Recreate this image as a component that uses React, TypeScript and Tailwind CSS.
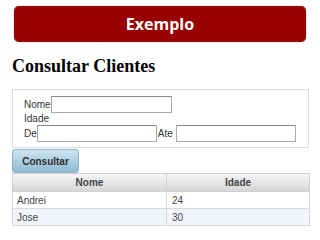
export default function App() {
  const rows = [
    { nome: "Andrei", idade: "24" },
    { nome: "Jose", idade: "30" },
  ];

  return (
    <div className="w-[320px] h-[240px] overflow-hidden bg-white font-['Liberation_Sans',Arial,sans-serif]">
      {/* Header bar */}
      <div className="mx-[14px] mt-[6px] flex h-[36px] items-center justify-center rounded-[5px] bg-[#990000] shadow-[0_0_1px_#666]">
        <span className="font-['Open_Sans',sans-serif] text-[16px] font-bold leading-none text-white">Exemplo</span>
      </div>

      <h1 className="ml-[12px] mt-[14px] font-['Liberation_Serif','Times_New_Roman',serif] text-[18px] font-bold leading-[20px] text-black">
        Consultar Clientes
      </h1>

      {/* Filter box */}
      <div className="ml-[12px] mt-[13px] h-[59px] w-[297px] border border-[#dddddd] pl-[11px] pt-[6px] text-[10px] leading-[12px] text-[#333]">
        <div className="flex h-[17px] items-center">
          <span>Nome</span>
          <input className="h-[17px] w-[121px] border border-[#aaa] border-t-[#888] bg-white" />
        </div>
        <div className="flex h-[12px] items-center">Idade</div>
        <div className="flex h-[17px] items-center">
          <span>De</span>
          <input className="h-[17px] w-[120px] border border-[#aaa] border-t-[#888] bg-white" />
          <span className="ml-px">Ate</span>
          <input className="ml-[3px] h-[17px] w-[120px] border border-[#aaa] border-t-[#888] bg-white" />
        </div>
      </div>

      <button className="ml-[12px] mt-px flex h-[24px] w-[67px] items-center justify-center rounded-[3px] border border-[#8fb3c7] bg-gradient-to-b from-[#cfe5f1] to-[#8dbad3] text-[10px] font-bold text-[#2e2e2e]">
        Consultar
      </button>

      {/* Results */}
      <table className="ml-[12px] w-[298px] border-collapse border border-[#d0d0d0] text-[10px] text-[#444]">
        <thead>
          <tr className="h-[18px] bg-gradient-to-b from-[#f6f6f6] to-[#d4d4d4]">
            <th className="w-[154px] border border-[#d0d0d0] font-bold text-[#444]">Nome</th>
            <th className="border border-[#d0d0d0] font-bold text-[#444]">Idade</th>
          </tr>
        </thead>
        <tbody>
          {rows.map((r, i) => (
            <tr key={r.nome} className={i % 2 ? "h-[17px] bg-[#f1f5fb]" : "h-[17px] bg-white"}>
              <td className="border border-[#d8d8d8] px-[4px] font-normal">{r.nome}</td>
              <td className="border border-[#d8d8d8] px-[5px]">{r.idade}</td>
            </tr>
          ))}
        </tbody>
      </table>
    </div>
  );
}
